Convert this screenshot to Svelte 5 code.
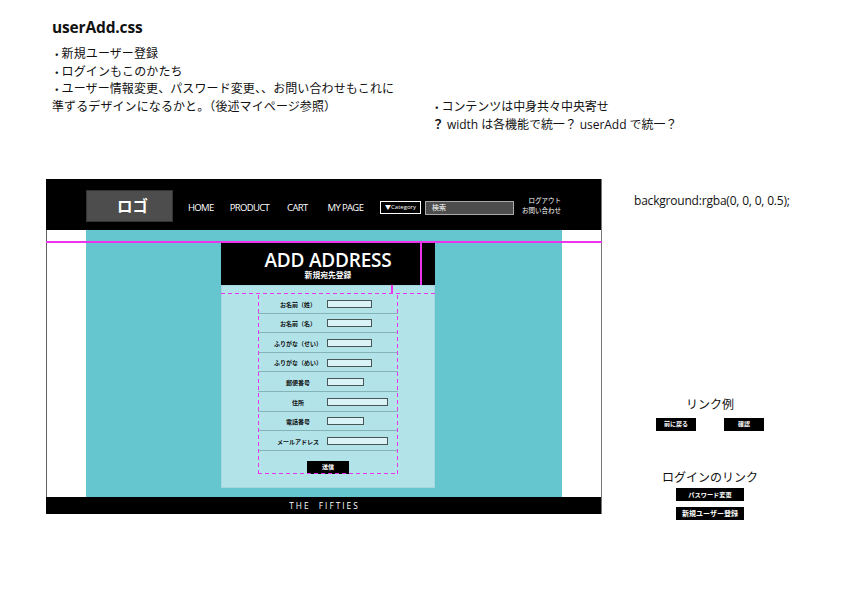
<script>
  const nav = ['HOME', 'PRODUCT', 'CART', 'MY PAGE'];
  const fields = [
    ['お名前（姓）', 'm'],
    ['お名前（名）', 'm'],
    ['ふりがな（せい）', 'm'],
    ['ふりがな（めい）', 'm'],
    ['郵便番号', 's'],
    ['住所', 'l'],
    ['電話番号', 's'],
    ['メールアドレス', 'l']
  ];
</script>

<main class="board">
  <section class="note intro">
    <h1>userAdd.css</h1>
    <p><span class="dot">・</span>新規ユーザー登録</p>
    <p><span class="dot">・</span>ログインもこのかたち</p>
    <p><span class="dot">・</span>ユーザー情報変更、パスワード変更、、お問い合わせもこれに</p>
    <p>準ずるデザインになるかと。（後述マイページ参照）</p>
  </section>

  <section class="note center">
    <p><span class="dot">・</span>コンテンツは中身共々中央寄せ</p>
    <p><b>？</b> width は各機能で統一？ userAdd で統一？</p>
  </section>

  <p class="note bg">background:rgba(0, 0, 0, 0.5);</p>

  <section class="mock">
    <header>
      <div class="logo">ロゴ</div>
      <nav>
        {#each nav as item}<span>{item}</span>{/each}
      </nav>
      <div class="cat">▼Category</div>
      <div class="search">検索</div>
      <div class="meta">ログアウト<br />お問い合わせ</div>
    </header>

    <div class="band">
      <div class="column">
        <div class="title">
          <h2>ADD ADDRESS</h2>
          <p>新規宛先登録</p>
        </div>
        <div class="panel">
          <div class="form">
            {#each fields as [label, size]}
              <div class="row">
                <span class="label">{label}</span>
                <span class="input {size}"></span>
              </div>
            {/each}
            <div class="send"><span class="btn">送信</span></div>
          </div>
        </div>
      </div>
    </div>

    <footer>THE&nbsp;&nbsp;FIFTIES</footer>

    <i class="guide h-main"></i>
    <i class="guide v-title"></i>
    <i class="guide v-tick"></i>
    <i class="dash-h"></i>
  </section>

  <section class="links one">
    <h3>リンク例</h3>
    <div class="pair"><span class="btn a">前に戻る</span><span class="btn a">確認</span></div>
  </section>

  <section class="links two">
    <h3>ログインのリンク</h3>
    <span class="btn b">パスワード変更</span>
    <span class="btn b wide">新規ユーザー登録</span>
  </section>
</main>

<style>
  :global(body) {
    margin: 0;
    background: #fff;
  }
  .board {
    position: relative;
    width: 843px;
    height: 596px;
    overflow: hidden;
    background: #fff;
    color: #111;
    font-family: "Open Sans", "Noto Sans CJK JP", sans-serif;
  }
  .note {
    position: absolute;
    margin: 0;
    font-size: 12px;
    line-height: 17.6px;
    white-space: nowrap;
  }
  .note p {
    margin: 0;
  }
  .dot {
    font-size: 9.5px;
    font-weight: 700;
    line-height: 1;
  }
  .intro {
    left: 52px;
    top: 17px;
    letter-spacing: 0.1px;
  }
  h1 {
    margin: 0 0 8px;
    font-size: 15.5px;
    line-height: 20px;
    font-weight: 700;
    letter-spacing: -0.15px;
  }
  .center {
    left: 432px;
    top: 98px;
    letter-spacing: -0.05px;
  }
  .bg {
    left: 634px;
    top: 192px;
    letter-spacing: -0.2px;
  }
  .mock {
    position: absolute;
    left: 46px;
    top: 179px;
    width: 556px;
    height: 335px;
    display: flex;
    flex-direction: column;
    box-sizing: border-box;
    border-right: 1px solid #777;
    border-left: 1px solid #606060;
  }
  header {
    height: 51px;
    flex: none;
    display: flex;
    align-items: center;
    background: #000;
    color: #fff;
    margin-left: -1px;
    padding-left: 40px;
    font-size: 9.5px;
  }
  .logo {
    box-sizing: border-box;
    width: 87px;
    height: 32px;
    margin-top: 2px;
    padding-left: 30px;
    background: #4d4d4d;
    border: 1px solid #333;
    font-size: 15.5px;
    font-weight: 700;
    line-height: 30px;
  }
  nav {
    display: flex;
    width: 188px;
    margin: 5px 0 0 15px;
    gap: 16px;
    letter-spacing: -0.65px;
    white-space: nowrap;
  }
  nav span:nth-child(3) {
    margin-left: 2px;
  }
  nav span:last-child {
    margin-left: 4px;
  }
  .cat {
    box-sizing: border-box;
    width: 41px;
    height: 13px;
    margin: 6px 0 0 4px;
    border: 1px solid #fff;
    font-size: 6px;
    line-height: 11px;
    text-align: center;
    white-space: nowrap;
  }
  .search {
    box-sizing: border-box;
    width: 89px;
    height: 14px;
    margin: 6px 0 0 4px;
    padding-left: 6px;
    border: 1px solid #aaa;
    background: #4d4d4d;
    font-size: 7px;
    line-height: 12px;
  }
  .meta {
    width: 47px;
    margin-top: 2px;
    font-size: 6.5px;
    line-height: 9.5px;
    text-align: right;
    white-space: nowrap;
  }
  .band {
    flex: 1;
    margin: 0 39px;
    background: #66c6d0;
  }
  .column {
    width: 214px;
    margin: 13px 0 0 135px;
  }
  .title {
    height: 42px;
    background: #000;
    color: #fff;
    text-align: center;
  }
  h2 {
    margin: 0;
    padding-top: 7px;
    font-size: 19px;
    line-height: 20px;
    font-weight: 600;
    letter-spacing: -0.2px;
  }
  .title p {
    margin: 1px 0 0;
    font-size: 7.8px;
    line-height: 9px;
    font-weight: 600;
  }
  .panel {
    height: 203px;
    padding-top: 8px;
    box-sizing: border-box;
    background: #b2e3e9;
    box-shadow: inset 0 0 0 1px #a4d8de;
  }
  .form {
    position: relative;
    box-sizing: border-box;
    width: 140px;
    height: 181px;
    margin-left: 37px;
    padding-top: 1px;
    display: flex;
    flex-direction: column;
  }
  .form::after {
    content: "";
    position: absolute;
    inset: 0;
    background:
      repeating-linear-gradient(0deg, #ee33ee 0 4px, transparent 4px 7px) left / 1px 100% no-repeat,
      repeating-linear-gradient(0deg, #ee33ee 0 4px, transparent 4px 7px) right / 1px 100% no-repeat,
      repeating-linear-gradient(90deg, #ee33ee 0 4px, transparent 4px 7px) bottom / 100% 1px no-repeat;
    pointer-events: none;
  }
  .row {
    box-sizing: border-box;
    height: 19.6px;
    flex: none;
    display: grid;
    grid-template-columns: 69px auto;
    align-items: center;
    border-bottom: 1px solid #84b3b8;
  }
  .label {
    padding: 1.5px 0 0 11px;
    font-size: 6px;
    font-weight: 700;
    text-align: center;
    white-space: nowrap;
    color: #111;
  }
  .input {
    box-sizing: border-box;
    height: 8px;
    margin-top: 1px;
    background: #daf3f6;
    border: 1px solid #4a5555;
  }
  .m { width: 45px; }
  .s { width: 37px; }
  .l { width: 61px; }
  .send {
    flex: 1;
    display: flex;
    justify-content: center;
    align-items: flex-end;
  }
  .btn {
    display: block;
    background: #000;
    color: #fff;
    font-size: 6px;
    font-weight: 700;
    text-align: center;
  }
  .send .btn {
    width: 42px;
    height: 13px;
    line-height: 13px;
  }
  footer {
    height: 17px;
    flex: none;
    margin-left: -1px;
    padding-left: 2px;
    box-sizing: border-box;
    background: #000;
    color: #fff;
    font-size: 8.3px;
    line-height: 17px;
    letter-spacing: 2px;
    text-align: center;
  }
  .guide, .dash-h {
    position: absolute;
    display: block;
  }
  .guide {
    background: #ee33ee;
  }
  .h-main {
    left: -1px;
    right: -1px;
    top: 62px;
    height: 2px;
  }
  .v-title {
    left: 373px;
    top: 64px;
    width: 2px;
    height: 42px;
  }
  .v-tick {
    left: 344px;
    top: 106px;
    width: 2px;
    height: 8px;
  }
  .dash-h {
    left: 174px;
    top: 114px;
    width: 214px;
    height: 1px;
    background: repeating-linear-gradient(90deg, #ee33ee 0 4px, transparent 4px 7px);
  }
  .links {
    position: absolute;
    text-align: center;
  }
  .links h3 {
    margin: 0;
    font-size: 12px;
    font-weight: 400;
    line-height: 16px;
    white-space: nowrap;
  }
  .one {
    left: 656px;
    top: 397px;
    width: 108px;
  }
  .pair {
    display: flex;
    justify-content: space-between;
    margin-top: 5px;
  }
  .btn.a {
    width: 40px;
    height: 13px;
    font-size: 6px;
    line-height: 13px;
  }
  .two {
    left: 654px;
    top: 470px;
    width: 112px;
  }
  .btn.b {
    width: 68px;
    height: 13px;
    margin: 2px auto 6px;
    font-size: 6.2px;
    line-height: 13px;
  }
  .btn.b.wide {
    font-size: 7px;
  }
</style>
